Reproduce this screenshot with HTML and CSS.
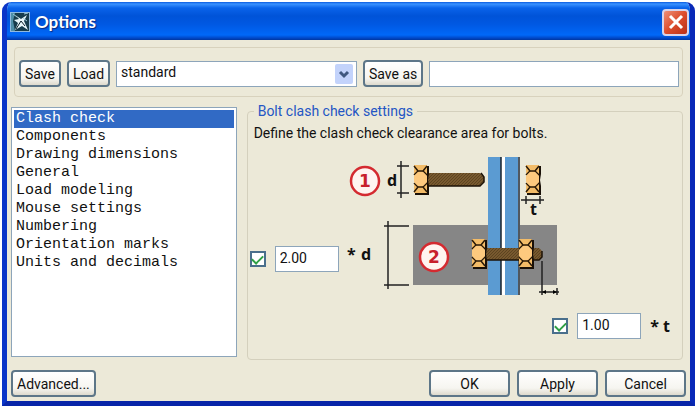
FILE: index.html
```html
<!DOCTYPE html>
<html lang="en">
<head>
  <meta charset="UTF-8" />
  <meta name="viewport" content="width=device-width, initial-scale=1.0" />
  <title>Options</title>
  <link rel="stylesheet" href="styles.css">
</head>
<body>

  <main class="window">

    <header class="titlebar">
      <svg class="titlebar-icon" width="20" height="20" viewBox="0 0 20 20" aria-hidden="true">
        <rect width="20" height="20" fill="#8fb9e0" />
        <rect x="1" y="1" width="18" height="18" fill="#173c4c" />
        <path d="M1 1h4L3 9l2 10H1z" fill="#4f8fa8" />
        <path d="M5 3l6 4 6-4-3 6 4 9-6-4-7 4 3-7-4-3 5-1z" fill="#e8f6fa" />
        <path d="M6 17l5-8 4 5" fill="none" stroke="#0b1d28" stroke-width="1" />
        <path d="M3 2l4 3M14 2l4-1M13 6l4 3" fill="none" stroke="#9cc9d8" stroke-width="1" />
      </svg>
      <h1 class="titlebar-title">Options</h1>
      <button class="close-btn" type="button" aria-label="Close">
        <svg width="16" height="16" viewBox="0 0 16 16" aria-hidden="true">
          <path d="M2 2l12 12M14 2L2 14" stroke="#fff" stroke-width="3" />
        </svg>
      </button>
    </header>

    <form class="content">

      <!-- Saved settings -->
      <div class="toolbar">
        <button class="btn" type="button">Save</button>
        <button class="btn" type="button">Load</button>
        <select class="preset" aria-label="Settings file">
          <option>standard</option>
        </select>
        <button class="btn btn-save-as" type="button">Save as</button>
        <input class="text-input save-name" type="text" aria-label="Save as name">
      </div>

      <div class="panels">
        <select class="category-list" size="9" aria-label="Category">
          <option class="category is-active">Clash check</option>
          <option class="category">Components</option>
          <option class="category">Drawing dimensions</option>
          <option class="category">General</option>
          <option class="category">Load modeling</option>
          <option class="category">Mouse settings</option>
          <option class="category">Numbering</option>
          <option class="category">Orientation marks</option>
          <option class="category">Units and decimals</option>
        </select>

        <fieldset class="settings">
          <legend>Bolt clash check settings</legend>
          <p class="settings-text">Define the clash check clearance area for bolts.</p>

          <div class="clearance">
            <div class="field field-d">
              <input class="check" type="checkbox" aria-label="Use diameter factor" checked>
              <input class="text-input factor" type="text" aria-label="Diameter factor" value="2.00">
            </div>

            <svg class="diagram" width="216" height="148" viewBox="0 0 216 148" role="img" aria-label="Bolt clearance dimensions d and t">
              <defs>
                <pattern id="thread" width="3" height="3" patternUnits="userSpaceOnUse">
                  <rect width="3" height="3" fill="#78592f" />
                  <path d="M0 3L3 0" stroke="#5c4420" stroke-width="1" />
                </pattern>
                <!-- bolt head / nut, seen from the side -->
                <g id="nut">
                  <path d="M1 1H15V9L14 15L15 21V30H1V22L2 20V10L1 8z" fill="#191007" />
                  <path d="M0 0H13V8L12 14L13 20V28H0V20L1 18V10L0 8z" fill="#f3bc68" />
                  <path d="M0 1L4 6H9L13 1M0 27L4 22H9L13 27" fill="none" stroke="#2a1a08" stroke-width="1.5" />
                  <path d="M4 6L0 10M9 6L13 10M4 22L0 18M9 22L13 18" stroke="#2a1a08" stroke-width="1.5" />
                  <path d="M4 7H9L13 11V17L9 21H4L0 17V11z" fill="#fdc97e" />
                </g>
              </defs>

              <rect x="68" y="74" width="144" height="60" fill="#868686" />

              <!-- plates -->
              <rect x="143" y="6" width="32" height="138" fill="#fff" />
              <rect x="143" y="6" width="13" height="138" fill="#5b9bd2" />
              <rect x="160" y="6" width="13" height="138" fill="#5b9bd2" />
              <path d="M156 6v138M174 6v138" stroke="#17202a" stroke-width="1.5" />

              <!-- loose bolt and nut -->
              <path d="M83 22H135L139 26V31L135 35H83z" fill="url(#thread)" />
              <path d="M83 35H135L139 31V26L136 22" fill="none" stroke="#1c1206" stroke-width="1.5" />
              <use href="#nut" x="69" y="14" />
              <use href="#nut" x="181" y="14" />

              <!-- fastened bolt -->
              <path d="M141 97H194L197 100V106L194 109H141z" fill="url(#thread)" />
              <path d="M141 109H194L197 106V100" fill="none" stroke="#1c1206" stroke-width="1.5" />
              <use href="#nut" x="127" y="88" />
              <use href="#nut" x="174" y="88" />

              <!-- dimension lines -->
              <g class="dimension">
                <path d="M56 10V47M52 15H64M52 42H64" />
                <path d="M43 70V138M39 75H64M39 134H64" />
                <path d="M176 49H199M181 45V53M195 45V53" />
                <path d="M197 110V144M194 141H214M212 137V144" />
              </g>
              <path d="M197 141l4-2v4zM212 141l-4-2v4z" />

              <g class="marker">
                <circle cx="20" cy="30" r="14" />
                <text x="20" y="36">1</text>
                <circle cx="89" cy="106" r="14" />
                <text x="89" y="112">2</text>
              </g>

              <g class="symbol">
                <text x="42" y="35">d</text>
                <text x="185" y="64">t</text>
                <text x="2" y="109">*</text>
                <text x="16" y="109">d</text>
              </g>
            </svg>
          </div>

          <div class="field field-t">
            <input class="check" type="checkbox" aria-label="Use thickness factor" checked>
            <input class="text-input factor" type="text" aria-label="Thickness factor" value="1.00">
            <span class="unit">* t</span>
          </div>
        </fieldset>
      </div>

      <footer class="actions">
        <button class="btn btn-advanced" type="button">Advanced...</button>
        <button class="btn btn-wide" type="button">OK</button>
        <button class="btn btn-wide" type="button">Apply</button>
        <button class="btn btn-wide" type="button">Cancel</button>
      </footer>

    </form>
  </main>

</body>
</html>
```

FILE: styles.css
```css
* { box-sizing: border-box; margin: 0; padding: 0; }

body {
  background-color: #fff;
  color: #111;
  font-family: Roboto, 'Liberation Sans', sans-serif;
  font-size: 14px;
  line-height: 16px;
  padding: 2px;
}

button, input, select {
  font: inherit;
  color: inherit;
}

.window {
  display: flex;
  flex-direction: column;
  min-height: calc(100vh - 4px);
  background-color: #ece9d8;
  border: 5px solid #0a35c8;
  border-top: none;
  border-bottom-color: #0825a8;
  border-right-color: #0828b8;
  border-radius: 9px 9px 0 0;
  overflow: hidden;
}

.titlebar {
  display: flex;
  align-items: center;
  gap: 5px;
  height: 38px;
  margin: 0 -5px;
  padding: 2px 6px 0 8px;
  background: linear-gradient(#0a5be0 0, #3a92ff 2px, #0a63ea 6px, #0053d8 14px, #0058e2 22px, #0068f8 33px, #0048c8 36px, #0036a0 38px);
}

.titlebar-title {
  flex: 1;
  font-family: Lato, 'Noto Sans', sans-serif;
  font-size: 17px;
  line-height: 20px;
  font-weight: bold;
  color: #fff;
  text-shadow: 1px 1px 1px #0a2a80;
}

.close-btn {
  display: flex;
  align-items: center;
  justify-content: center;
  width: 27px;
  height: 27px;
  border: 2px solid #d8d4ea;
  border-radius: 4px;
  background: linear-gradient(135deg, #ee9078, #dc4c2c 50%, #b83018);
}

.content {
  flex: 1;
  display: flex;
  flex-direction: column;
  padding: 7px 4px 4px;
}

.toolbar {
  display: flex;
  align-items: center;
  gap: 6px;
  margin: 0 3px;
  padding: 12px 3px 9px 4px;
  border: 1px solid #d8d2bd;
  border-radius: 4px;
}

.btn {
  height: 27px;
  min-width: 42px;
  padding: 0 4px;
  border: 2px solid #5d7688;
  border-radius: 4px;
  background: linear-gradient(#fff, #f6f5f0 70%, #dedacd);
  white-space: nowrap;
}

.btn-save-as {
  min-width: 60px;
}

.preset {
  flex: 213;
  min-width: 0;
  height: 26px;
  padding: 0 24px 3px 4px;
  border: 1px solid #8da5ba;
  border-radius: 0;
  appearance: none;
  background: #fff url("data:image/svg+xml,%3Csvg xmlns='http://www.w3.org/2000/svg' width='18' height='20'%3E%3Crect width='18' height='20' rx='2' fill='%23c3d3fb'/%3E%3Cpath d='M5 8l4 4 4-4' fill='none' stroke='%23405880' stroke-width='3'/%3E%3C/svg%3E") no-repeat right 3px center;
}

.text-input {
  height: 26px;
  padding: 0 4px 3px;
  border: 1px solid #8da5ba;
  background-color: #fff;
}

.save-name {
  flex: 242;
  min-width: 0;
}

.panels {
  flex: 1;
  display: flex;
  align-items: stretch;
  gap: 10px;
  margin-top: 10px;
}

.category-list {
  flex: 220;
  min-width: 0;
  padding: 2px;
  border: 1px solid #8da5ba;
  border-radius: 0;
  background-color: #fff;
  font-family: 'Liberation Mono', 'Courier New', monospace;
  font-size: 15px;
  overflow: hidden;
}

.category {
  min-height: 18px;
  padding: 0 2px;
  line-height: 18px;
}

.category.is-active {
  background-color: #316ac5;
  color: #fff;
}

.settings {
  flex: 429;
  min-width: 0;
  margin: -4px 3px -3px 0;
  padding: 6px 4px 0 2px;
  border: 1px solid #d4d0bd;
  border-radius: 4px;
}

.settings legend {
  margin-left: 4px;
  padding: 0 4px;
  color: #2456c4;
}

.settings-text {
  padding-left: 4px;
}

.clearance {
  display: flex;
  align-items: flex-end;
  gap: 6px;
  margin-top: 10px;
}

.field {
  display: flex;
  align-items: center;
  gap: 9px;
}

.field-d {
  padding-bottom: 27px;
}

.field-t {
  justify-content: flex-end;
  margin-top: 14px;
  padding-right: 8px;
}

.factor {
  width: 64px;
}

.check {
  display: flex;
  align-items: center;
  justify-content: center;
  width: 16px;
  height: 16px;
  border: 2px solid #4a6f8c;
  appearance: none;
  background-color: #fff;
}

.check:checked::after {
  content: '';
  width: 5px;
  height: 9px;
  margin-bottom: 2px;
  border: solid #2fa045;
  border-width: 0 2px 2px 0;
  transform: rotate(45deg);
}

.unit {
  font-family: 'Noto Sans', sans-serif;
  font-size: 16px;
  font-weight: bold;
}

.diagram {
  flex: none;
  display: block;
}

.dimension path {
  fill: none;
  stroke: #222;
  stroke-width: 1.5;
}

.marker circle {
  fill: #fff4f0;
  stroke: #d42a30;
  stroke-width: 2.5;
}

.marker text {
  fill: #c8202c;
  font-size: 17px;
  font-weight: bold;
  font-family: 'DejaVu Sans', sans-serif;
  text-anchor: middle;
}

.symbol text {
  fill: #111;
  font-size: 16px;
  font-weight: bold;
  font-family: 'Noto Sans', sans-serif;
}

.actions {
  display: flex;
  gap: 7px;
  margin-top: 13px;
}

.btn-advanced {
  margin-right: auto;
}

.btn-wide {
  width: 81px;
}
```
